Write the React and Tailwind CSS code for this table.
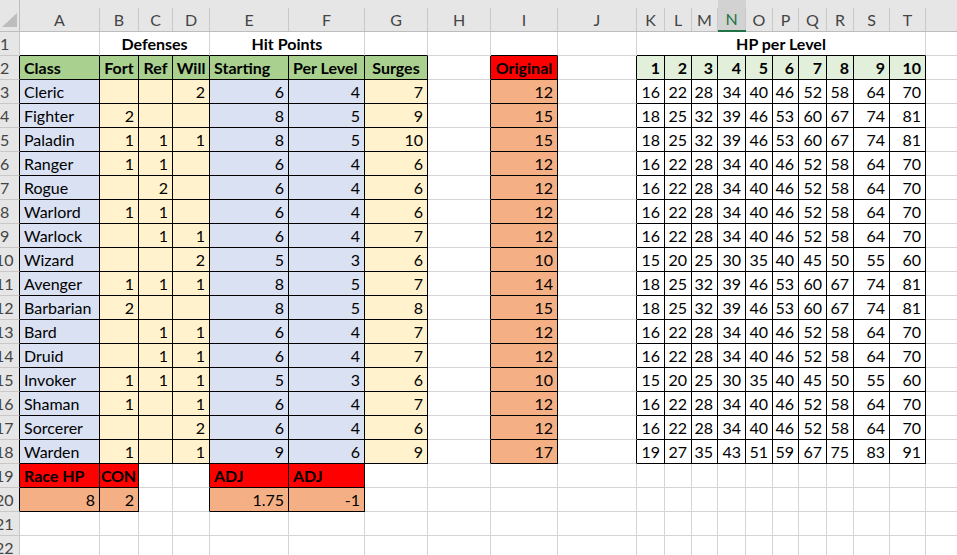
import React from "react";

// Spaltenbreiten: Zeilenkopf, A..U
const COLS = ["A", "B", "C", "D", "E", "F", "G", "H", "I", "J", "K", "L", "M", "N", "O", "P", "Q", "R", "S", "T", "U"];

const HP = {
  10: [15, 20, 25, 30, 35, 40, 45, 50, 55, 60],
  12: [16, 22, 28, 34, 40, 46, 52, 58, 64, 70],
  14: [18, 25, 32, 39, 46, 53, 60, 67, 74, 81],
  15: [18, 25, 32, 39, 46, 53, 60, 67, 74, 81],
  17: [19, 27, 35, 43, 51, 59, 67, 75, 83, 91],
};

const CLASSES = [
  ["Cleric", "", "", 2, 6, 4, 7, 12],
  ["Fighter", 2, "", "", 8, 5, 9, 15],
  ["Paladin", 1, 1, 1, 8, 5, 10, 15],
  ["Ranger", 1, 1, "", 6, 4, 6, 12],
  ["Rogue", "", 2, "", 6, 4, 6, 12],
  ["Warlord", 1, 1, "", 6, 4, 6, 12],
  ["Warlock", "", 1, 1, 6, 4, 7, 12],
  ["Wizard", "", "", 2, 5, 3, 6, 10],
  ["Avenger", 1, 1, 1, 8, 5, 7, 14],
  ["Barbarian", 2, "", "", 8, 5, 8, 15],
  ["Bard", "", 1, 1, 6, 4, 7, 12],
  ["Druid", "", 1, 1, 6, 4, 7, 12],
  ["Invoker", 1, 1, 1, 5, 3, 6, 10],
  ["Shaman", 1, "", 1, 6, 4, 7, 12],
  ["Sorcerer", "", "", 2, 6, 4, 6, 12],
  ["Warden", 1, "", 1, 9, 6, 9, 17],
];

const BG = {
  none: "bg-white",
  blue: "bg-[#d9e1f2]",
  yel: "bg-[#fff2cc]",
  grn: "bg-[#a9d08e]",
  lgrn: "bg-[#e2efda]",
  red: "bg-[#ff0000]",
  org: "bg-[#f4b084]",
};

const SPAN = { 1: "", 2: "col-span-2", 3: "col-span-3", 10: "col-span-10" };

const ALIGN = { l: "justify-start", c: "justify-center", r: "justify-end" };

function bordered(r, c) {
  if (r >= 2 && r <= 18) return (c >= 1 && c <= 7) || c === 9 || (c >= 11 && c <= 20);
  if (r === 19 || r === 20) return c === 1 || c === 2 || c === 5 || c === 6;
  return false;
}

function buildRow(r) {
  const cells = [];
  const blank = (c) => ({ c });
  if (r === 1) {
    cells.push(blank(1));
    cells.push({ c: 2, span: 3, text: "Defenses", bold: true, align: "c" });
    cells.push({ c: 5, span: 2, text: "Hit Points", bold: true, align: "c" });
    [7, 8, 9, 10].forEach((c) => cells.push(blank(c)));
    cells.push({ c: 11, span: 10, text: "HP per Level", bold: true, align: "c" });
    cells.push(blank(21));
    return cells;
  }
  if (r === 2) {
    const h = [
      ["Class", "l"], ["Fort", "c"], ["Ref", "c"], ["Will", "c"],
      ["Starting", "l"], ["Per Level", "l"], ["Surges", "c"],
    ];
    h.forEach(([t, a], i) => cells.push({ c: i + 1, text: t, bold: true, align: a, bg: "grn" }));
    cells.push(blank(8));
    cells.push({ c: 9, text: "Original", bold: true, align: "c", bg: "red" });
    cells.push(blank(10));
    for (let i = 1; i <= 10; i++) cells.push({ c: 10 + i, text: i, bold: true, align: "r", bg: "lgrn" });
    cells.push(blank(21));
    return cells;
  }
  if (r >= 3 && r <= 18) {
    const [name, f, rf, w, st, per, sg, orig] = CLASSES[r - 3];
    cells.push({ c: 1, text: name, align: "l", bg: "blue" });
    cells.push({ c: 2, text: f, align: "r", bg: "yel" });
    cells.push({ c: 3, text: rf, align: "r", bg: "yel" });
    cells.push({ c: 4, text: w, align: "r", bg: "yel" });
    cells.push({ c: 5, text: st, align: "r", bg: "blue" });
    cells.push({ c: 6, text: per, align: "r", bg: "blue" });
    cells.push({ c: 7, text: sg, align: "r", bg: "yel" });
    cells.push(blank(8));
    cells.push({ c: 9, text: orig, align: "r", bg: "org" });
    cells.push(blank(10));
    HP[orig].forEach((v, i) => cells.push({ c: 11 + i, text: v, align: "r" }));
    cells.push(blank(21));
    return cells;
  }
  for (let c = 1; c <= 21; c++) cells.push(blank(c));
  if (r === 19) {
    cells[0] = { c: 1, text: "Race HP", bold: true, align: "l", bg: "red" };
    cells[1] = { c: 2, text: "CON", bold: true, align: "l", bg: "red", tight: true };
    cells[4] = { c: 5, text: "ADJ", bold: true, align: "l", bg: "red" };
    cells[5] = { c: 6, text: "ADJ", bold: true, align: "l", bg: "red" };
  }
  if (r === 20) {
    cells[0] = { c: 1, text: 8, align: "r", bg: "org" };
    cells[1] = { c: 2, text: 2, align: "r", bg: "org" };
    cells[4] = { c: 5, text: "1.75", align: "r", bg: "org" };
    cells[5] = { c: 6, text: "-1", align: "r", bg: "org" };
  }
  return cells;
}

const Cell = ({ r, cell }) => {
  const span = cell.span || 1;
  const last = cell.c + span - 1;
  const rightBlack = bordered(r, last) || bordered(r, last + 1);
  let bottomBlack = false;
  for (let c = cell.c; c <= last; c++) if (bordered(r, c) || bordered(r + 1, c)) bottomBlack = true;
  return (
    <div
      className={[
        "h-[24px] flex items-center leading-[20px] whitespace-nowrap overflow-hidden border-r border-b",
        cell.tight ? "px-[1px] tracking-[-0.3px]" : "px-[4px]",
        SPAN[span],
        ALIGN[cell.align || "l"],
        BG[cell.bg || "none"],
        cell.bold ? "font-bold" : "font-normal",
        rightBlack ? "border-r-black" : "border-r-[#d4d4d4]",
        bottomBlack ? "border-b-black" : "border-b-[#d4d4d4]",
      ].join(" ")}
    >
      {cell.text}
    </div>
  );
};

// Zeilenkopf ist links abgeschnitten, wie im Screenshot
const RowHeader = ({ r }) => (
  <div
    className={[
      "h-[24px] overflow-hidden bg-[#e6e6e6] text-[#444] border-r border-b border-b-[#c8c8c8] leading-[23px] whitespace-nowrap",
      bordered(r, 1) ? "border-r-black" : "border-r-[#c8c8c8]",
    ].join(" ")}
  >
    <div className={r < 10 ? "ml-[0px]" : "-ml-[5px]"}>{r}</div>
  </div>
);

const ColHeader = ({ letter }) => {
  const sel = letter === "N";
  return (
    <div
      className={[
        "h-[32px] flex flex-col pt-[8px]",
        sel ? "bg-[#d2d2d2] border-b-2 border-b-[#217346] text-[#217346]" : "bg-[#e6e6e6] border-b border-b-[#bdbdbd] text-[#444]",
      ].join(" ")}
    >
      <div className="flex-1 flex items-center justify-center border-r border-r-[#c8c8c8] leading-[20px]">{letter}</div>
    </div>
  );
};

export default function App() {
  const rows = [];
  for (let r = 1; r <= 22; r++) rows.push(r);
  return (
    <div className="w-[957px] h-[555px] overflow-hidden bg-white">
      <div
        className="grid grid-cols-[20px_80px_39px_34px_37px_79px_76px_63px_63px_67px_79px_28px_27px_26px_28px_27px_26px_28px_27px_36px_36px_80px] w-[1006px] text-[16px] text-black"
        style={{ fontFamily: "Lato, 'Open Sans', sans-serif" }}
      >
        <div className="h-[32px] bg-[#e6e6e6] border-b border-r border-[#bdbdbd]">
          <svg width="19" height="31" viewBox="0 0 19 31">
            <polygon points="2,27 17,27 17,13" fill="#bdbdbd" />
          </svg>
        </div>
        {COLS.map((l) => (
          <ColHeader key={l} letter={l} />
        ))}
        {rows.map((r) => (
          <React.Fragment key={r}>
            <RowHeader r={r} />
            {buildRow(r).map((cell) => (
              <Cell key={cell.c} r={r} cell={cell} />
            ))}
          </React.Fragment>
        ))}
      </div>
    </div>
  );
}
